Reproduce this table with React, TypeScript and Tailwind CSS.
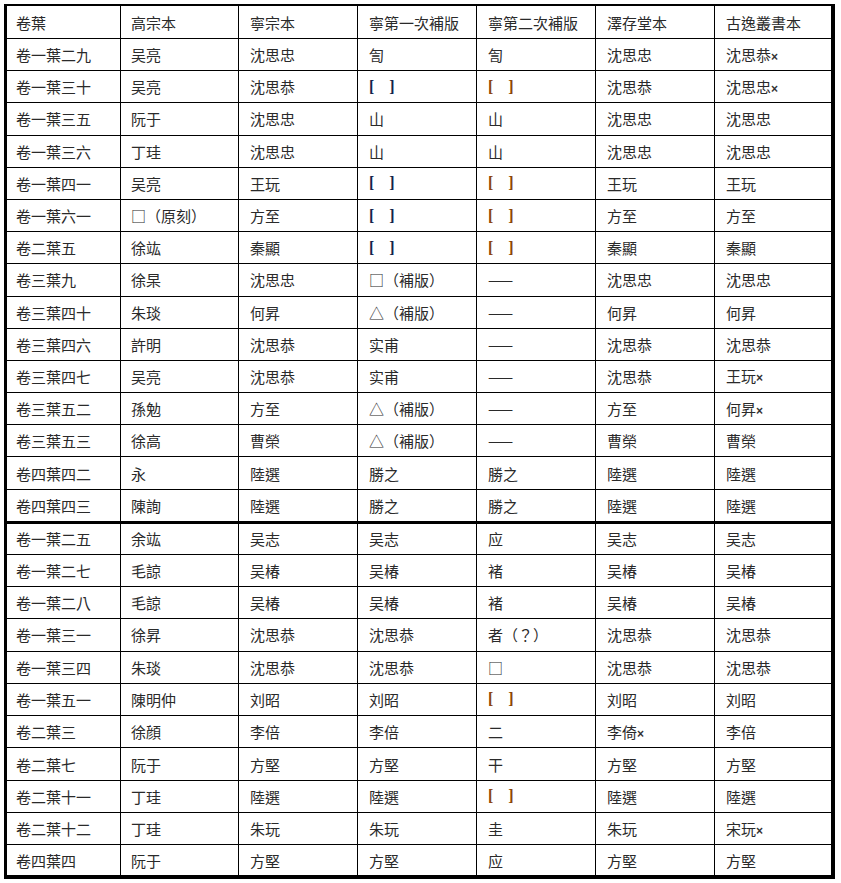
import React from "react";

type Cell = string;

const header: Cell[] = ["卷葉", "高宗本", "寧宗本", "寧第一次補版", "寧第二次補版", "澤存堂本", "古逸叢書本"];

// "[]" = 空格, 尾部 "×" = 誤字
const rows: Cell[][] = [
  ["卷一葉二九", "吴亮", "沈思忠", "訇", "訇", "沈思忠", "沈思恭×"],
  ["卷一葉三十", "吴亮", "沈思恭", "[]", "[]", "沈思恭", "沈思忠×"],
  ["卷一葉三五", "阮于", "沈思忠", "山", "山", "沈思忠", "沈思忠"],
  ["卷一葉三六", "丁珪", "沈思忠", "山", "山", "沈思忠", "沈思忠"],
  ["卷一葉四一", "吴亮", "王玩", "[]", "[]", "王玩", "王玩"],
  ["卷一葉六一", "□（原刻）", "方至", "[]", "[]", "方至", "方至"],
  ["卷二葉五", "徐竑", "秦顯", "[]", "[]", "秦顯", "秦顯"],
  ["卷三葉九", "徐杲", "沈思忠", "□（補版）", "——", "沈思忠", "沈思忠"],
  ["卷三葉四十", "朱琰", "何昇", "△（補版）", "——", "何昇", "何昇"],
  ["卷三葉四六", "許明", "沈思恭", "实甫", "——", "沈思恭", "沈思恭"],
  ["卷三葉四七", "吴亮", "沈思恭", "实甫", "——", "沈思恭", "王玩×"],
  ["卷三葉五二", "孫勉", "方至", "△（補版）", "——", "方至", "何昇×"],
  ["卷三葉五三", "徐高", "曹榮", "△（補版）", "——", "曹榮", "曹榮"],
  ["卷四葉四二", "永", "陸選", "勝之", "勝之", "陸選", "陸選"],
  ["卷四葉四三", "陳詢", "陸選", "勝之", "勝之", "陸選", "陸選"],
  ["卷一葉二五", "余竑", "吴志", "吴志", "应", "吴志", "吴志"],
  ["卷一葉二七", "毛諒", "吴椿", "吴椿", "褚", "吴椿", "吴椿"],
  ["卷一葉二八", "毛諒", "吴椿", "吴椿", "褚", "吴椿", "吴椿"],
  ["卷一葉三一", "徐昇", "沈思恭", "沈思恭", "者（？）", "沈思恭", "沈思恭"],
  ["卷一葉三四", "朱琰", "沈思恭", "沈思恭", "□", "沈思恭", "沈思恭"],
  ["卷一葉五一", "陳明仲", "刘昭", "刘昭", "[]", "刘昭", "刘昭"],
  ["卷二葉三", "徐顔", "李倍", "李倍", "二", "李倚×", "李倍"],
  ["卷二葉七", "阮于", "方堅", "方堅", "干", "方堅", "方堅"],
  ["卷二葉十一", "丁珪", "陸選", "陸選", "[]", "陸選", "陸選"],
  ["卷二葉十二", "丁珪", "朱玩", "朱玩", "圭", "朱玩", "宋玩×"],
  ["卷四葉四", "阮于", "方堅", "方堅", "应", "方堅", "方堅"],
];

const colWidths = ["w-[114px] pl-[9px]", "w-[118px] pl-[10px]", "w-[119px] pl-[11px]", "w-[119px] pl-[11px]", "w-[119px] pl-[11px]", "w-[119px] pl-[11px]", "w-[116px] pl-[11px]"];

function rowHeight(i: number) {
  if (i < 14) return "h-[32.2px] border-b";
  if (i === 14) return "h-[34px] border-b-[3px]";
  if (i === 15) return "h-[31px] border-b";
  if (i === 25) return "h-[30px]";
  return "h-[32.3px] border-b";
}

function CellText({ text, col }: { text: string; col: number }) {
  if (text === "[]") {
    const color = col === 3 ? "text-[#14234a]" : "text-[#8c4508]";
    return (
      <span className={`${color} font-['Liberation_Serif',serif] text-[16px] font-bold`}>
        [<span className="inline-block w-[15px]" />]
      </span>
    );
  }
  if (text.endsWith("×")) {
    return (
      <span>
        {text.slice(0, -1)}
        <span className="font-['Liberation_Sans',sans-serif] text-[12px] font-bold text-[#333]">×</span>
      </span>
    );
  }
  return <span>{text}</span>;
}

function Row({ cells, className }: { cells: string[]; className: string }) {
  return (
    <div className={`flex border-black ${className}`}>
      {cells.map((c, j) => (
        <div
          key={j}
          className={`flex items-center shrink-0 ${colWidths[j]} ${j < 6 ? "border-r border-black" : ""}`}
        >
          <CellText text={c} col={j} />
        </div>
      ))}
    </div>
  );
}

export default function App() {
  return (
    <div className="min-h-[883px] bg-white pt-[4px] pl-[4px]">
      <div className="w-[831px] border-t-2 border-l-[3px] border-r-4 border-b-4 border-black text-[15px] leading-none text-[#2a2a2a] font-['Noto_Sans_CJK_TC','Noto_Sans_CJK_SC',sans-serif]">
        <Row cells={header} className="h-[33px] border-b" />
        {rows.map((r, i) => (
          <Row key={i} cells={r} className={rowHeight(i)} />
        ))}
      </div>
    </div>
  );
}
